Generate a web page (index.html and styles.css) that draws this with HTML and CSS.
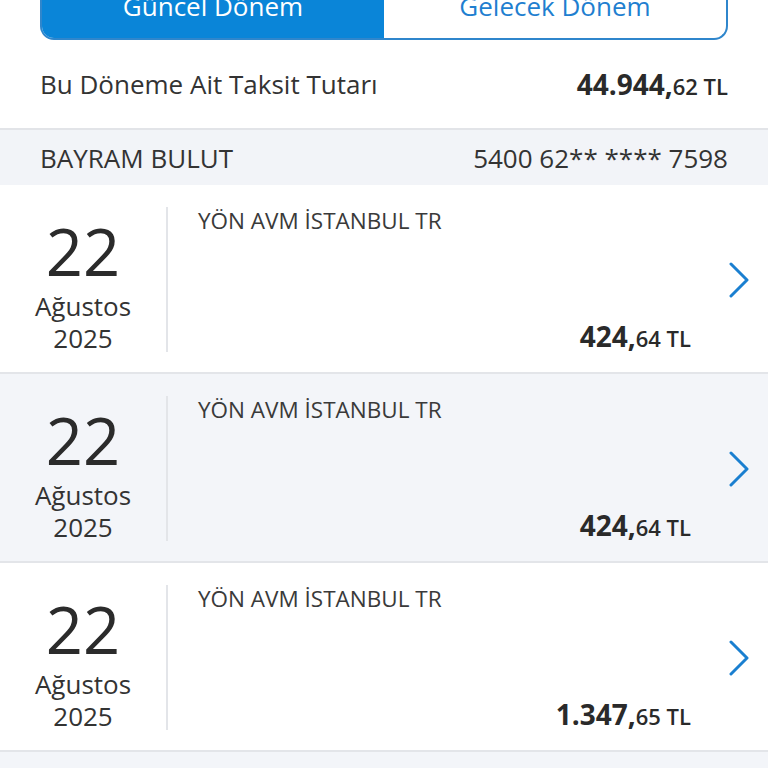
FILE: index.html
```html
<!DOCTYPE html>
<html lang="tr">
<head>
<meta charset="utf-8">
<link rel="stylesheet" href="styles.css">
</head>
<body>
<div class="page">
  <div class="tabs-wrap">
    <div class="tabs">
      <div class="tab active">Güncel Dönem</div>
      <div class="tab">Gelecek Dönem</div>
    </div>
  </div>
  <div class="total">
    <span class="total-label">Bu Döneme Ait Taksit Tutarı</span>
    <span class="amount big"><b>44.944,</b><small>62 TL</small></span>
  </div>
  <div class="card-head">
    <span>BAYRAM BULUT</span>
    <span>5400 62** **** 7598</span>
  </div>
  <div class="list">
    <div class="row">
      <div class="date"><div class="day">22</div><div class="month">Ağustos</div><div class="year">2025</div></div>
      <div class="info">
        <div class="merchant">YÖN AVM İSTANBUL TR</div>
        <div class="amount"><b>424,</b><small>64 TL</small></div>
      </div>
      <div class="chev"><svg width="22" height="36" viewBox="0 0 22 36"><path d="M3 2 L19 18 L3 34" fill="none" stroke="#1a7fd0" stroke-width="3" stroke-linecap="round" stroke-linejoin="round"/></svg></div>
    </div>
    <div class="row alt">
      <div class="date"><div class="day">22</div><div class="month">Ağustos</div><div class="year">2025</div></div>
      <div class="info">
        <div class="merchant">YÖN AVM İSTANBUL TR</div>
        <div class="amount"><b>424,</b><small>64 TL</small></div>
      </div>
      <div class="chev"><svg width="22" height="36" viewBox="0 0 22 36"><path d="M3 2 L19 18 L3 34" fill="none" stroke="#1a7fd0" stroke-width="3" stroke-linecap="round" stroke-linejoin="round"/></svg></div>
    </div>
    <div class="row">
      <div class="date"><div class="day">22</div><div class="month">Ağustos</div><div class="year">2025</div></div>
      <div class="info">
        <div class="merchant">YÖN AVM İSTANBUL TR</div>
        <div class="amount"><b>1.347,</b><small>65 TL</small></div>
      </div>
      <div class="chev"><svg width="22" height="36" viewBox="0 0 22 36"><path d="M3 2 L19 18 L3 34" fill="none" stroke="#1a7fd0" stroke-width="3" stroke-linecap="round" stroke-linejoin="round"/></svg></div>
    </div>
  </div>
  <div class="rest"></div>
</div>
</body>
</html>
```
FILE: styles.css
```css
html, body {
  margin: 0;
  padding: 0;
  background: #ffffff;
}
body {
  font-family: "Open Sans", "Noto Sans", sans-serif;
  color: #2b2b2b;
  width: 768px;
  height: 768px;
  overflow: hidden;
}
.page {
  display: flex;
  flex-direction: column;
}
.tabs-wrap {
  padding: 0 40px;
  height: 40px;
  overflow: visible;
}
.tabs {
  display: flex;
  height: 60px;
  margin-top: -20px;
  border: 2px solid #2f86cc;
  border-radius: 0 0 14px 14px;
  border-top: none;
  overflow: hidden;
  box-sizing: border-box;
}
.tab {
  flex: 1;
  display: flex;
  align-items: flex-end;
  justify-content: center;
  padding-bottom: 17px;
  font-size: 26px;
  line-height: 30px;
  color: #1f7fd0;
  box-sizing: border-box;
}
.tab.active {
  background: #0a85d8;
  color: #ffffff;
}
.total {
  display: flex;
  justify-content: space-between;
  align-items: center;
  padding: 0 40px;
  height: 88px;
  border-bottom: 2px solid #e2e4e8;
}
.total-label {
  font-size: 26px;
  color: #333;
}
.amount {
  color: #2a2a2a;
  white-space: nowrap;
}
.amount b {
  font-weight: 700;
  font-size: 28px;
}
.amount small {
  font-weight: 600;
  font-size: 22px;
}
.card-head {
  display: flex;
  justify-content: space-between;
  align-items: center;
  padding: 0 40px;
  height: 55px;
  background: #f2f4f8;
  font-size: 26px;
  color: #333;
}
.row {
  display: flex;
  height: 189px;
  box-sizing: border-box;
  padding: 22px 0 20px;
  border-bottom: 2px solid #e3e5e9;
  background: #ffffff;
}
.row.alt {
  background: #f3f5f9;
}
.date {
  width: 166px;
  display: flex;
  flex-direction: column;
  align-items: center;
  justify-content: flex-start;
  color: #2b2b2b;
}
.day {
  font-size: 65px;
  line-height: 66px;
  font-weight: 400;
  margin-top: 11px;
  margin-bottom: 6px;
}
.month, .year {
  font-size: 26px;
  line-height: 32px;
  color: #333;
}
.info {
  flex: 1;
  border-left: 2px solid #e3e5e9;
  padding-left: 30px;
  display: flex;
  flex-direction: column;
  justify-content: space-between;
  align-items: stretch;
}
.merchant {
  font-size: 22.5px;
  line-height: 28px;
  color: #3a3a3a;
}
.info .amount {
  text-align: right;
  line-height: 30px;
  margin-bottom: -4px;
}
.chev {
  width: 77px;
  display: flex;
  align-items: center;
  justify-content: flex-end;
  padding-right: 18px;
  box-sizing: border-box;
}
.rest {
  height: 20px;
  background: #f3f5f9;
}
```
